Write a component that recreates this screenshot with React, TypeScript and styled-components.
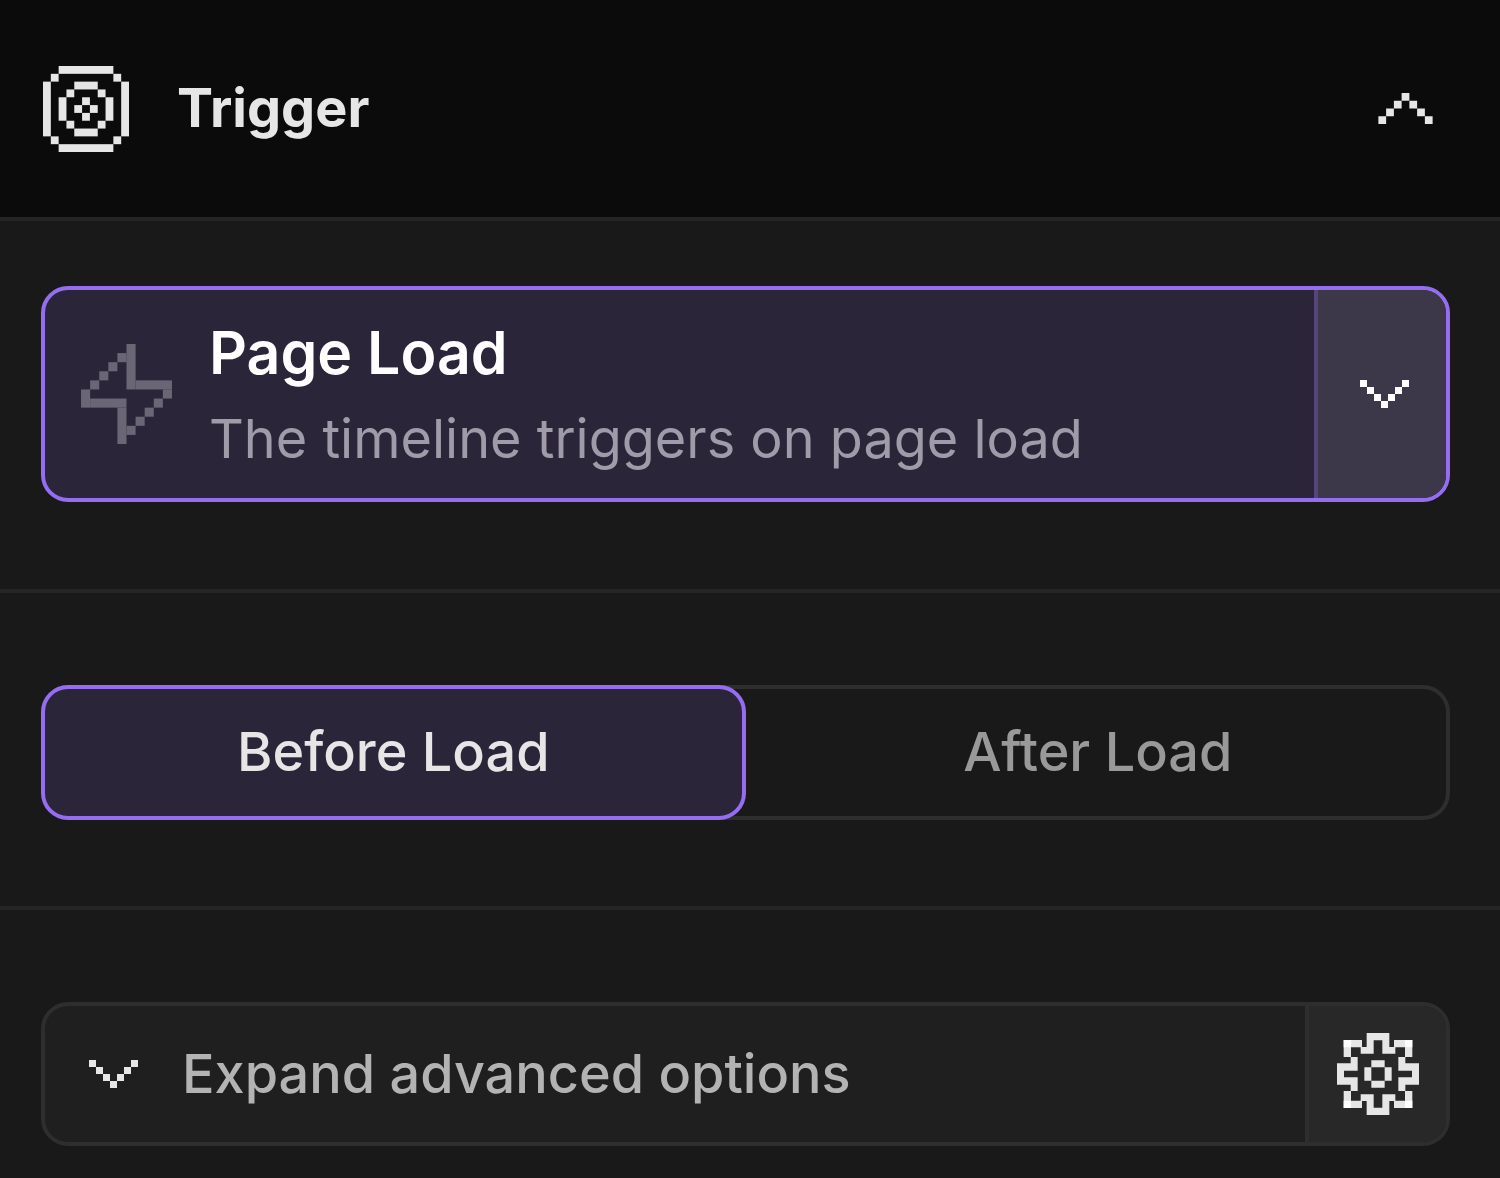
import React, { useState } from "react";
import styled, { createGlobalStyle } from "styled-components";

const color = {
  header: "#0b0b0b",
  body: "#191919",
  line: "#252525",
  outline: "#2e2e2e",
  accent: "#956df1",
  accentBg: "#2b253a",
  text: "#e6e6e6",
};

const GlobalStyle = createGlobalStyle`
  *, *::before, *::after { box-sizing: border-box; }
  body { margin: 0; background: ${color.body}; }
  button { margin: 0; padding: 0; border: 0; background: none; color: inherit; font: inherit; cursor: pointer; }
  svg { display: block; flex: none; }
`;

const Panel = styled.main`
  min-height: 100vh;
  background: ${color.body};
  color: ${color.text};
  font-family: Inter, "Liberation Sans", sans-serif;
  font-size: 54px;
  font-weight: 500;
  line-height: 72px;
`;

const Header = styled.header`
  display: flex;
  align-items: center;
  gap: 48px;
  height: 221px;
  padding: 0 67px 0 43px;
  background: ${color.header};
  border-bottom: 4px solid ${color.line};
`;

const Title = styled.h2`
  flex: 1;
  margin: 0;
  padding-bottom: 2px;
  font-size: 54px;
  font-weight: 700;
`;

const Section = styled.section<{ $first?: boolean }>`
  padding: ${(p) => (p.$first ? "65px 50px 87px 41px" : "92px 50px 86px 41px")};
  border-top: ${(p) => (p.$first ? 0 : 4)}px solid ${color.line};
  &:last-child { padding-bottom: 32px; }
`;

const TriggerCard = styled.div`
  display: flex;
  height: 216px;
  border: 4px solid ${color.accent};
  border-radius: 27px;
  background: ${color.accentBg};
  overflow: hidden;
`;

const TriggerMain = styled.button`
  display: flex;
  flex: 1;
  align-items: center;
  gap: 37px;
  padding: 0 36px;
  text-align: left;
`;

const TriggerText = styled.span`
  display: flex;
  flex-direction: column;
  gap: 14px;
  padding-top: 4px;
`;

const TriggerName = styled.span`
  color: #fff;
  font-size: 59px;
  font-weight: 600;
`;

const TriggerInfo = styled.span`
  color: #9f9ba8;
  font-weight: 400;
`;

const TriggerToggle = styled.button`
  display: flex;
  align-items: center;
  justify-content: center;
  width: 132px;
  padding-left: 4px;
  border-left: 4px solid #56447b;
  background: #3d374a;
  color: #fff;
`;

const Segments = styled.div`
  display: grid;
  grid-template-columns: 1fr 1fr;
  height: 135px;
  border-radius: 27px;
  box-shadow: inset 0 0 0 4px ${color.outline};
`;

const Segment = styled.button<{ $active: boolean }>`
  padding-bottom: 2px;
  border: 4px solid ${(p) => (p.$active ? color.accent : "transparent")};
  border-radius: 27px;
  background: ${(p) => (p.$active ? color.accentBg : "transparent")};
  color: ${(p) => (p.$active ? color.text : "#999")};
`;

const Advanced = styled.div`
  display: flex;
  height: 144px;
  border: 4px solid ${color.outline};
  border-radius: 27px;
  background: #1f1f1f;
  overflow: hidden;
`;

const AdvancedToggle = styled.button`
  display: flex;
  flex: 1;
  align-items: center;
  gap: 44px;
  padding: 0 44px;
  color: #b3b3b3;
  text-align: left;
`;

const AdvancedSettings = styled.button`
  display: flex;
  align-items: center;
  justify-content: center;
  width: 141px;
  border-left: 4px solid ${color.outline};
  background: #282828;
`;

type Cell = [x: number, y: number, w?: number, h?: number];

function PixelIcon({ cells, cols, rows, width, fill = color.text }: {
  cells: Cell[]; cols: number; rows: number; width: number; fill?: string;
}) {
  return (
    <svg width={width} height={Math.round((width * rows) / cols)} viewBox={`0 0 ${cols} ${rows}`} fill={fill} aria-hidden="true">
      {cells.map(([x, y, w = 1, h = 1]) => (
        <rect key={`${x}-${y}`} x={x} y={y} width={w} height={h} />
      ))}
    </svg>
  );
}

const targetCells: Cell[] = [
  [2, 0, 7], [2, 10, 7], [0, 2, 1, 7], [10, 2, 1, 7],
  [1, 1], [9, 1], [1, 9], [9, 9],
  [4, 2, 3], [4, 8, 3], [2, 4, 1, 3], [8, 4, 1, 3],
  [3, 3], [7, 3], [3, 7], [7, 7],
  [5, 4], [4, 5], [6, 5], [5, 6],
];

const boltCells: Cell[] = [
  [5, 0, 1, 5], [4, 1], [3, 2], [2, 3], [1, 4], [6, 4, 4], [0, 5, 1, 2], [9, 5],
  [1, 6, 4], [8, 6], [4, 7, 1, 4], [7, 7], [6, 8], [5, 9],
];

const downCells: Cell[] = [[0, 0], [1, 1], [2, 2], [3, 3], [4, 2], [5, 1], [6, 0]];
const upCells: Cell[] = [[0, 3], [1, 2], [2, 1], [3, 0], [4, 1], [5, 2], [6, 3]];

function GearIcon() {
  const corner = (
    <>
      <path d="M89 0H123V22H110V62H71V42H89ZM20 21H75V43H42V72H20ZM41 72H62V91H41ZM0 91H62V113H21V123H0Z" />
      <path d="M103 82H123V103H103ZM82 103H103V123H82Z" />
      <path d="M20 21H42V43H20Z" fill="#fff" />
    </>
  );
  return (
    <svg width="82" height="82" viewBox="0 0 246 246" fill={color.text} aria-hidden="true">
      <g>{corner}</g>
      <g transform="matrix(-1 0 0 1 246 0)">{corner}</g>
      <g transform="matrix(1 0 0 -1 0 246)">{corner}</g>
      <g transform="matrix(-1 0 0 -1 246 246)">{corner}</g>
    </svg>
  );
}

export default function App() {
  const [timing, setTiming] = useState("Before Load");
  return (
    <>
      <GlobalStyle />
      <Panel>
        <Header>
          <PixelIcon cells={targetCells} cols={11} rows={11} width={86} />
          <Title>Trigger</Title>
          <button type="button" aria-label="Collapse trigger" aria-expanded="true">
            <PixelIcon cells={upCells} cols={7} rows={4} width={55} />
          </button>
        </Header>
        <Section $first>
          <TriggerCard>
            <TriggerMain type="button">
              <PixelIcon cells={boltCells} cols={10} rows={11} width={91} fill="#6b6675" />
              <TriggerText>
                <TriggerName>Page Load</TriggerName>
                <TriggerInfo>The timeline triggers on page load</TriggerInfo>
              </TriggerText>
            </TriggerMain>
            <TriggerToggle type="button" aria-label="Choose trigger" aria-haspopup="listbox">
              <PixelIcon cells={downCells} cols={7} rows={4} width={49} fill="#fff" />
            </TriggerToggle>
          </TriggerCard>
        </Section>
        <Section>
          <Segments role="group" aria-label="Load timing">
            {["Before Load", "After Load"].map((name) => (
              <Segment key={name} type="button" $active={timing === name} aria-pressed={timing === name} onClick={() => setTiming(name)}>
                {name}
              </Segment>
            ))}
          </Segments>
        </Section>
        <Section>
          <Advanced>
            <AdvancedToggle type="button" aria-expanded="false">
              <PixelIcon cells={downCells} cols={7} rows={4} width={49} />
              Expand advanced options
            </AdvancedToggle>
            <AdvancedSettings type="button" aria-label="Advanced settings">
              <GearIcon />
            </AdvancedSettings>
          </Advanced>
        </Section>
      </Panel>
    </>
  );
}
